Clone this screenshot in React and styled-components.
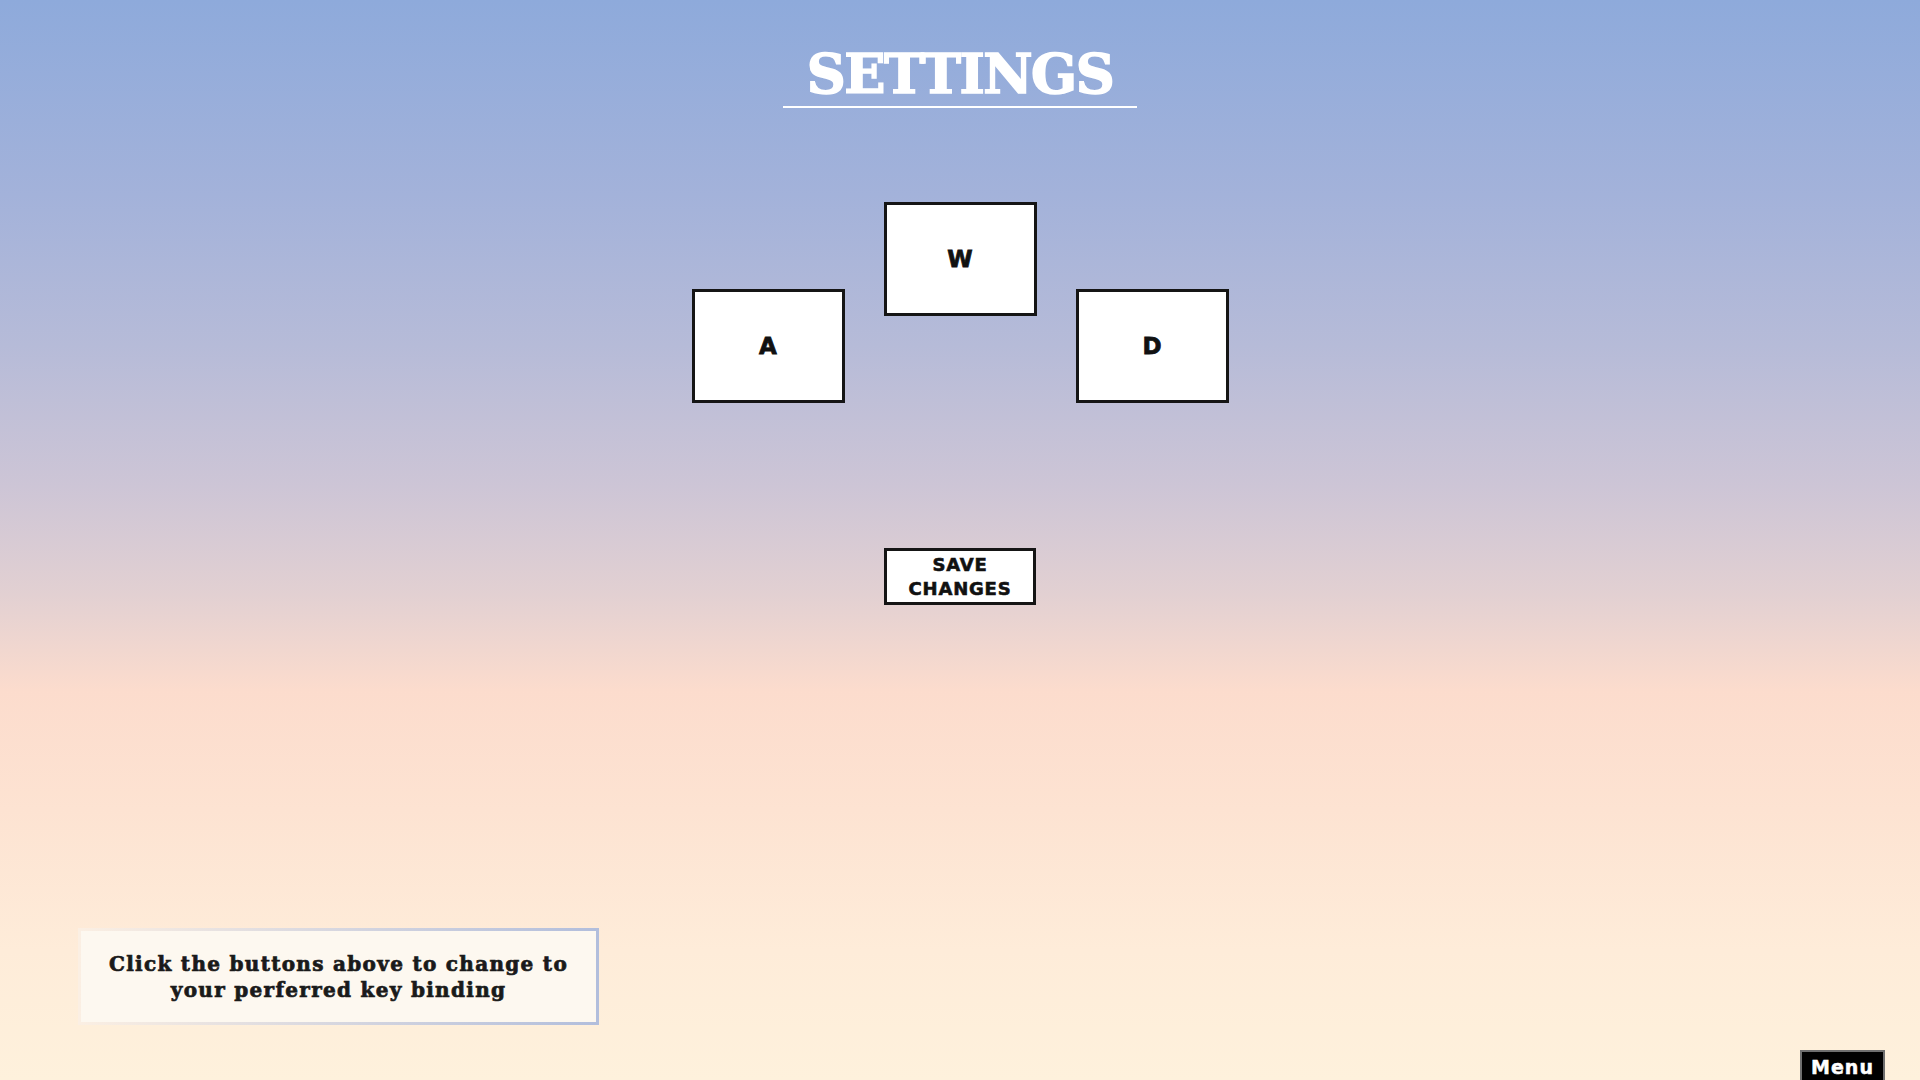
import styled, { createGlobalStyle } from 'styled-components';

const GlobalStyle = createGlobalStyle`
  html, body {
    margin: 0;
    padding: 0;
    height: 100%;
  }
  body {
    overflow: hidden;
    font-family: "DejaVu Sans", "Liberation Sans", sans-serif;
  }
`;

const Page = styled.div`
  height: 100vh;
  box-sizing: border-box;
  display: flex;
  flex-direction: column;
  align-items: center;
  background: linear-gradient(
    to bottom,
    #8eaadb 0%,
    #a3b2da 18%,
    #b6bbd8 32%,
    #cdc5d6 45%,
    #e2d0d2 55%,
    #fcdccd 64%,
    #fde3d2 75%,
    #feecd9 88%,
    #fef1dc 100%
  );
`;

const Title = styled.h1`
  margin: 46px 0 0;
  padding: 0 24px 4px;
  font-family: "DejaVu Serif", "Liberation Serif", serif;
  font-weight: 700;
  font-size: 54px;
  line-height: 56px;
  letter-spacing: -1.5px;
  color: #ffffff;
  -webkit-text-stroke: 1.6px #ffffff;
  border-bottom: 2px solid #ffffff;
`;

const Keys = styled.div`
  margin-top: 94px;
  display: flex;
  align-items: flex-start;
  gap: 39px;
`;

const KeyButton = styled.button`
  width: 153px;
  height: 114px;
  margin-top: ${(p) => (p.$low ? '87px' : '0')};
  box-sizing: border-box;
  display: flex;
  align-items: center;
  justify-content: center;
  background: #ffffff;
  border: 3px solid #151515;
  padding: 0;
  font-family: "DejaVu Sans", "Liberation Sans", sans-serif;
  font-weight: 700;
  font-size: 23px;
  color: #111;
  -webkit-text-stroke: 0.8px #111;
  cursor: pointer;
`;

const SaveButton = styled.button`
  margin-top: 145px;
  width: 152px;
  height: 57px;
  box-sizing: border-box;
  background: #ffffff;
  border: 3px solid #151515;
  padding: 0;
  font-family: "DejaVu Sans", "Liberation Sans", sans-serif;
  font-weight: 700;
  font-size: 18px;
  line-height: 24px;
  letter-spacing: 0.8px;
  color: #111;
  -webkit-text-stroke: 0.6px #111;
  cursor: pointer;
`;

const Footer = styled.div`
  margin-top: auto;
  align-self: stretch;
  display: flex;
  justify-content: space-between;
  align-items: flex-end;
  padding: 0 35px 0 78px;
`;

const Hint = styled.div`
  width: 521px;
  height: 97px;
  margin-bottom: 55px;
  box-sizing: border-box;
  display: flex;
  align-items: center;
  justify-content: center;
  text-align: center;
  background: #fdf8f0;
  border: 3px solid;
  border-image: linear-gradient(to right, #fbefe3, #b2bedc) 1;
  font-family: "DejaVu Serif", "Liberation Serif", serif;
  font-weight: 700;
  font-size: 20px;
  line-height: 26px;
  letter-spacing: 1.3px;
  color: #1a1a1a;
  -webkit-text-stroke: 0.7px #1a1a1a;
`;

const MenuButton = styled.button`
  width: 85px;
  height: 30px;
  box-sizing: border-box;
  background: #000000;
  border: 2px solid #6e6e6e;
  border-bottom: none;
  padding: 2px 0 0;
  font-family: "DejaVu Sans", "Liberation Sans", sans-serif;
  font-weight: 700;
  font-size: 19px;
  letter-spacing: 1px;
  color: #ffffff;
  -webkit-text-stroke: 0.5px #ffffff;
  cursor: pointer;
`;

const App = () => {
  return (
    <>
      <GlobalStyle />
      <Page>
        <Title>SETTINGS</Title>
        <Keys>
          <KeyButton $low>A</KeyButton>
          <KeyButton>W</KeyButton>
          <KeyButton $low>D</KeyButton>
        </Keys>
        <SaveButton>
          SAVE
          <br />
          CHANGES
        </SaveButton>
        <Footer>
          <Hint>
            Click the buttons above to change to
            <br />
            your perferred key binding
          </Hint>
          <MenuButton>Menu</MenuButton>
        </Footer>
      </Page>
    </>
  );
};

export default App;
